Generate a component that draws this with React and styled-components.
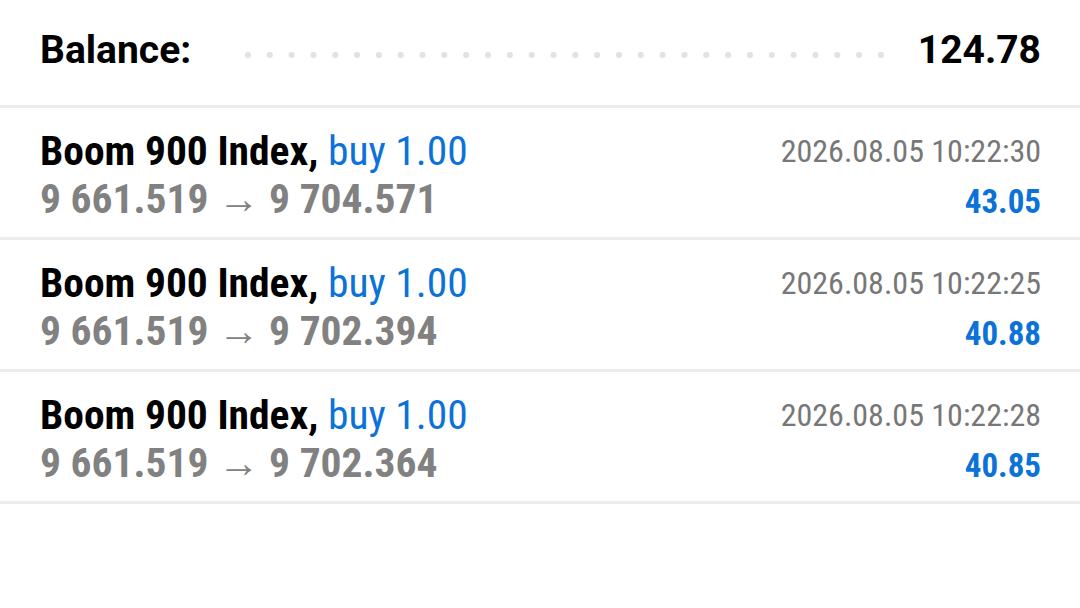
import React from 'react';
import styled, { createGlobalStyle } from 'styled-components';

const GlobalStyle = createGlobalStyle`
    html, body {
        margin: 0;
        padding: 0;
        background: #ffffff;
    }
    body {
        font-family: 'Roboto', 'Liberation Sans', sans-serif;
    }
`;

const trades = [
    { symbol: 'Boom 900 Index', side: 'buy', volume: '1.00', open: '9 661.519', close: '9 704.571', time: '2026.08.05 10:22:30', profit: '43.05' },
    { symbol: 'Boom 900 Index', side: 'buy', volume: '1.00', open: '9 661.519', close: '9 702.394', time: '2026.08.05 10:22:25', profit: '40.88' },
    { symbol: 'Boom 900 Index', side: 'buy', volume: '1.00', open: '9 661.519', close: '9 702.364', time: '2026.08.05 10:22:28', profit: '40.85' },
];

const TradeRow = ({ trade }) => (
    <Row>
        <Left>
            <Title>
                {trade.symbol},{' '}
                <Side>
                    {trade.side} {trade.volume}
                </Side>
            </Title>
            <Prices>
                {trade.open} <Arrow>→</Arrow> {trade.close}
            </Prices>
        </Left>
        <Right>
            <Time>{trade.time}</Time>
            <Profit>{trade.profit}</Profit>
        </Right>
    </Row>
);

const App = () => (
    <Page>
        <GlobalStyle />
        <Header>
            <Label>Balance:</Label>
            <Dots />
            <Amount>124.78</Amount>
        </Header>
        {trades.map((t, i) => (
            <TradeRow key={i} trade={t} />
        ))}
    </Page>
);

export default App;

const Page = styled.div`
    width: 1080px;
    height: 608px;
    background: #ffffff;
    overflow: hidden;
`;

const Header = styled.div`
    height: 105px;
    display: flex;
    align-items: center;
    padding: 0 39px 0 40px;
    border-bottom: 3px solid #ededed;
    font-family: 'Roboto', sans-serif;
    font-weight: 700;
    font-size: 39px;
    color: #000000;
`;

const Label = styled.span`
    margin-top: -6px;
`;

const Dots = styled.span`
    flex: 1;
    height: 6px;
    margin: 5px 26px 0 46px;
    background-image: radial-gradient(circle, #e2e2e2 2.8px, transparent 3.3px);
    background-size: 22px 6px;
    background-repeat: round no-repeat;
    background-position: left center;
`;

const Amount = styled.span`
    margin-top: -6px;
`;

const Row = styled.div`
    height: 110px;
    display: flex;
    justify-content: space-between;
    align-items: flex-start;
    padding: 19px 39px 0 40px;
    border-bottom: 3px solid #ededed;
    font-family: 'Roboto Condensed', 'Roboto', sans-serif;
    font-stretch: condensed;
`;

const Left = styled.div`
    display: flex;
    flex-direction: column;
    line-height: 48px;
    font-size: 41.5px;
`;

const Title = styled.div`
    color: #000000;
    font-weight: 700;
`;

const Side = styled.span`
    color: #0b72d7;
    font-weight: 400;
`;

const Prices = styled.div`
    color: #818181;
    font-weight: 700;
`;

const Arrow = styled.span`
    font-weight: 400;
`;

const Right = styled.div`
    display: flex;
    flex-direction: column;
    align-items: flex-end;
`;

const Time = styled.div`
    color: #777777;
    font-size: 32px;
    line-height: 48px;
`;

const Profit = styled.div`
    color: #0b72d7;
    font-size: 33px;
    font-weight: 700;
    line-height: 54px;
`;
